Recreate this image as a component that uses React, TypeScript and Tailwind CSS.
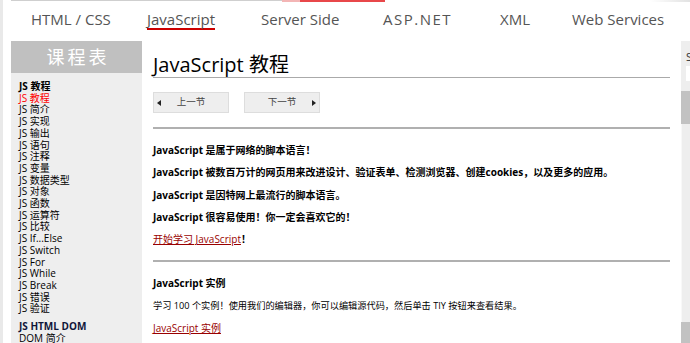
import React from "react";

const sideItems = [
  "简介",
  "实现",
  "输出",
  "语句",
  "注释",
  "变量",
  "数据类型",
  "对象",
  "函数",
  "运算符",
  "比较",
  "If...Else",
  "Switch",
  "For",
  "While",
  "Break",
  "错误",
  "验证",
];

function LeftArrow() {
  return (
    <svg width="4" height="6" viewBox="0 0 4 6">
      <path d="M4 0 L0 3 L4 6 Z" fill="#222" />
    </svg>
  );
}
function RightArrow() {
  return (
    <svg width="4" height="6" viewBox="0 0 4 6">
      <path d="M0 0 L4 3 L0 6 Z" fill="#222" />
    </svg>
  );
}

export default function App() {
  return (
    <div className="flex w-[690px] h-[343px] overflow-hidden bg-white font-['Open_Sans','Noto_Sans_CJK_SC',sans-serif] text-black">
      <div className="w-[3px] shrink-0 bg-[#e9e9e9]" />
      <div className="flex min-w-0 flex-1 flex-col">
        {/* top strip */}
        <div className="flex h-[2px] shrink-0 pl-[8px]">
          <div className="h-[1px] w-[271px] bg-[#cfcfcf]" />
          <div className="h-[2px] w-[18px] bg-[#f3b5b5]" />
          <div className="h-[2px] w-[85px] bg-[#e8474a]" />
          <div className="flex-1" />
          <div className="h-[2px] w-[40px] bg-gradient-to-r from-white to-[#e2e2e2]" />
        </div>
        {/* nav */}
        <div className="flex h-[39px] shrink-0 pl-[28px] pt-[8px] text-[15px] leading-[18px] text-[#555]">
          <div className="w-[116px] shrink-0">HTML / CSS</div>
          <div className="w-[114px] shrink-0">
            <span className="inline-block border-b-2 border-[#cc0000]">JavaScript</span>
          </div>
          <div className="w-[122px] shrink-0">Server Side</div>
          <div className="w-[117px] shrink-0 tracking-[1.5px]">ASP.NET</div>
          <div className="w-[72px] shrink-0">XML</div>
          <div className="shrink-0 whitespace-nowrap">Web Services</div>
        </div>
        {/* body */}
        <div className="flex min-h-0 flex-1 pl-[8px]">
          {/* left sidebar */}
          <div className="flex w-[131px] shrink-0 flex-col">
            <div className="flex h-[32px] shrink-0 items-center justify-center bg-[#c0c0c0] pl-[3px] text-[18px] tracking-[3px] text-white">
              课程表
            </div>
            <div className="flex-1 bg-[#eeeeee] pl-[8px] pt-[8px] text-[10px] leading-[11.7px]">
              <div className="font-bold">JS 教程</div>
              <div className="text-[#ff0000]">JS 教程</div>
              {sideItems.map((t) => (
                <div key={t}>JS {t}</div>
              ))}
              <div className="mt-[6px] font-bold text-[#10163a]">JS HTML DOM</div>
              <div>DOM 简介</div>
            </div>
          </div>
          {/* main */}
          <div className="ml-[11px] w-[517px] shrink-0 pt-[12px]">
            <h1 className="border-b border-[#aaaaaa] text-[20px] leading-[24px] text-black">
              JavaScript 教程
            </h1>
            <div className="mt-[14px] flex gap-[15px] text-[9.5px] text-[#444]">
              <div className="flex h-[21px] w-[76px] items-center justify-between border border-[#dddddd] bg-[#eeeeee] px-[3px]">
                <LeftArrow />
                <span>上一节</span>
                <span className="w-[4px]" />
              </div>
              <div className="flex h-[21px] w-[76px] items-center justify-between border border-[#dddddd] bg-[#eeeeee] px-[3px]">
                <span className="w-[4px]" />
                <span>下一节</span>
                <RightArrow />
              </div>
            </div>
            <div className="mt-[14px] h-[2px] bg-[#b0b0b0]" />
            <div className="mt-[10px] text-[10px] leading-[22.3px]">
              <p className="font-bold">JavaScript 是属于网络的脚本语言！</p>
              <p className="font-bold">
                JavaScript 被数百万计的网页用来改进设计、验证表单、检测浏览器、创建cookies，以及更多的应用。
              </p>
              <p className="font-bold">JavaScript 是因特网上最流行的脚本语言。</p>
              <p className="font-bold">JavaScript 很容易使用！你一定会喜欢它的！</p>
              <p>
                <span className="text-[#990000] underline">开始学习 JavaScript</span>
                <span className="font-bold">！</span>
              </p>
            </div>
            <div className="mt-[10px] h-[2px] bg-[#b0b0b0]" />
            <div className="mt-[10px] text-[10px] leading-[22.5px]">
              <h2 className="font-bold">JavaScript 实例</h2>
              <p className="text-[9.2px]">
                学习 100 个实例！使用我们的编辑器，你可以编辑源代码，然后单击 TIY 按钮来查看结果。
              </p>
              <p>
                <span className="text-[#990000] underline">JavaScript 实例</span>
              </p>
            </div>
          </div>
          {/* right sidebar */}
          <div className="ml-[11px] flex min-w-0 flex-1 flex-col bg-[#eeeeee]">
            <div className="pl-[5px] pt-[10px] text-[11px] leading-[12px] text-[#333]">S</div>
            <div className="ml-[5px] mt-[3px] h-[15px] bg-white" />
            <div className="mt-[10px] h-[33px] bg-[#c2c2c2]" />
            <div className="flex-1 border-l border-[#f8f8f8]" />
            <div className="h-[21px] bg-[#c2c2c2]" />
          </div>
        </div>
      </div>
    </div>
  );
}
